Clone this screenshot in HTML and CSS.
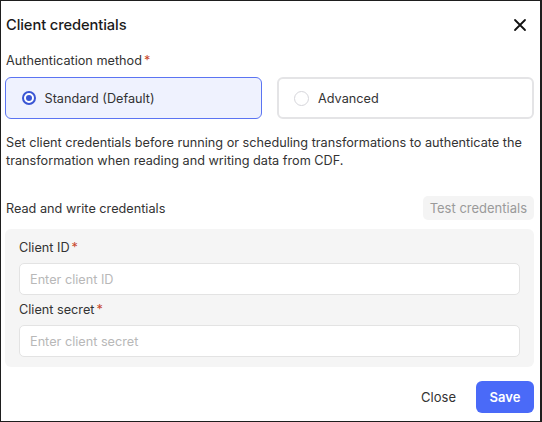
FILE: index.html
```html
<!DOCTYPE html>
<html>
<head>
<meta charset="utf-8">
<link rel="stylesheet" href="styles.css">
</head>
<body>
<div class="dialog">
  <div class="header">
    <div class="title">Client credentials</div>
    <button class="close" aria-label="Close">
      <svg width="14" height="14" viewBox="0 0 14 14"><path d="M2 2L12 12M12 2L2 12" stroke="#111" stroke-width="1.8" stroke-linecap="round"/></svg>
    </button>
  </div>
  <div class="label top-label">Authentication method<span class="req">*</span></div>
  <div class="options">
    <div class="option selected"><span class="radio on"></span><span>Standard (Default)</span></div>
    <div class="option"><span class="radio"></span><span>Advanced</span></div>
  </div>
  <p class="desc">Set client credentials before running or scheduling transformations to authenticate the transformation when reading and writing data from CDF.</p>
  <div class="section-row">
    <div class="section-title">Read and write credentials</div>
    <button class="test">Test credentials</button>
  </div>
  <div class="panel">
    <div class="label">Client ID<span class="req">*</span></div>
    <div class="input">Enter client ID</div>
    <div class="label">Client secret<span class="req">*</span></div>
    <div class="input">Enter client secret</div>
  </div>
  <div class="footer">
    <button class="btn-close">Close</button>
    <button class="btn-save">Save</button>
  </div>
</div>
</body>
</html>
```
FILE: styles.css
```css
* { box-sizing: border-box; }
html, body { margin: 0; padding: 0; }
body { font-family: Inter, "Noto Sans", sans-serif; color: #333; background: #fff; }
button { font-family: inherit; border: none; background: none; padding: 0; cursor: pointer; }
.dialog {
  width: 542px; height: 422px;
  border: 1px solid #1e1e1e; border-right-width: 2px;
  padding: 0 6px 0 4px;
  display: flex; flex-direction: column;
}
.header { height: 47px; display: flex; align-items: center; justify-content: space-between; padding-left: 1px; }
.title { font-size: 14.7px; font-weight: 500; color: #1a1a1a; letter-spacing: -0.1px; }
.close { width: 24px; height: 24px; display: flex; align-items: center; justify-content: center; margin-right: 2px; }
.label { font-size: 12.7px; line-height: 18px; color: #333; }
.top-label { margin-top: 4px; padding-left: 1px; }
.req { color: #c8462b; margin-left: 2px; }
.options { display: grid; grid-template-columns: 1fr 1fr; gap: 15px; margin-top: 7px; }
.option {
  height: 42px; border: 2px solid #e4e4e6; border-radius: 6px;
  display: flex; align-items: center; gap: 9px; padding-left: 15px;
  font-size: 12.7px; color: #333;
}
.option.selected { border-color: #5b74f2; background: #eff2fe; border-width: 1.5px; padding-left: 15.5px; }
.radio { width: 15px; height: 15px; border-radius: 50%; border: 1.5px solid #d6d6db; background: #fff; flex: none; }
.option.selected .radio { width: 14px; height: 14px; }
.radio.on { border: 2px solid #3a56d4; background: #fff; position: relative; }
.radio.on::after { content: ""; position: absolute; left: 2px; top: 2px; width: 6px; height: 6px; border-radius: 50%; background: #3a56d4; }
.desc { margin: 15px 0 0 1px; font-size: 12.7px; line-height: 18px; color: #333; }
.section-row { display: flex; align-items: center; justify-content: space-between; margin-top: 26px; padding-left: 1px; }
.section-title { font-size: 12.7px; color: #333; }
.test { height: 24px; padding: 0 7px; border-radius: 5px; background: #f4f4f4; color: #9a9a9a; font-size: 13px; }
.panel { margin-top: 9px; background: #f5f5f5; border-radius: 6px; padding: 10px 14px 10px 14px; display: flex; flex-direction: column; }
.panel .input { margin-top: 6px; height: 32px; background: #fff; border: 1px solid #e3e3e3; border-radius: 5px; display: flex; align-items: center; padding-left: 10px; font-size: 12.7px; color: #b8b8b8; }
.panel .input + .label { margin-top: 6px; }
.footer { display: flex; justify-content: flex-end; align-items: center; margin-top: 14px; gap: 8px; }
.btn-close { height: 32px; padding: 0 12px; font-size: 13px; color: #333; border-radius: 6px; }
.btn-save { height: 32px; width: 58px; border-radius: 6px; background: #4a6af8; color: #fff; font-size: 13px; font-weight: 600; }
```
